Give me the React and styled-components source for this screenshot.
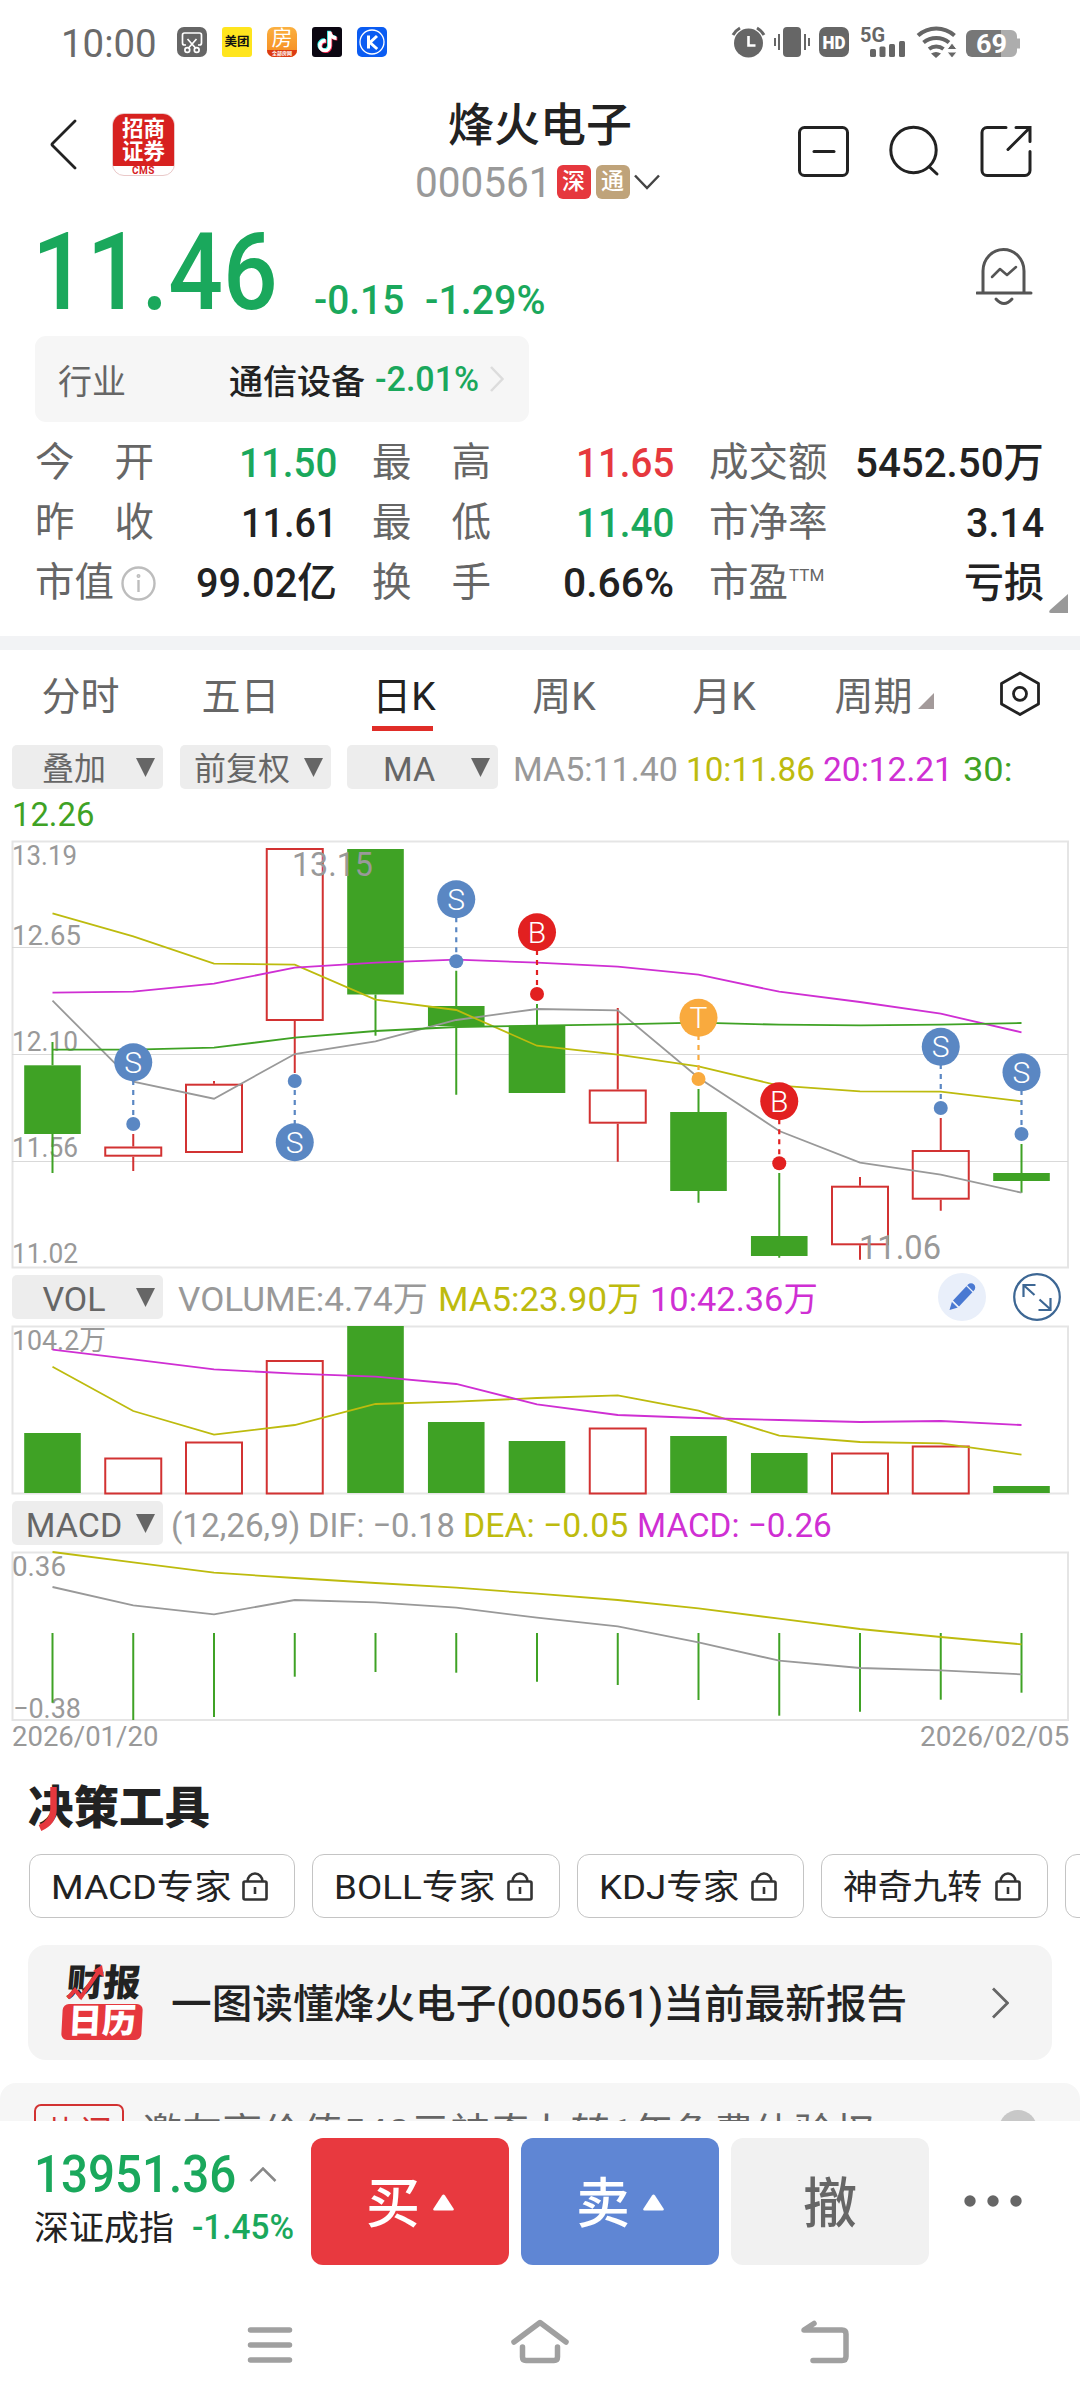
import React, { useLayoutEffect, useRef, useState } from 'react';
import styled, { createGlobalStyle } from 'styled-components';
import { FaTiktok } from 'react-icons/fa6';

const GREEN = '#1aa85c';
const RED = '#e6383e';
const UP = '#d23232';
const DOWN = '#3fa225';
const GREY = '#999';
const YELLOW = '#bdbb0e';
const PURPLE = '#cf2fd3';

const GlobalStyle = createGlobalStyle`
    * {
        box-sizing: border-box;
    }
    body {
        margin: 0;
        background: #fff;
        font-family: Roboto, "Noto Sans CJK SC", sans-serif;
        color: #222;
    }
    svg {
        display: block;
        flex: none;
    }
`;
const Screen = styled.div`
    width: 1080px;
    height: 2408px;
    overflow: hidden;
    background: #fff;
    display: flex;
    flex-direction: column;
    > * {
        flex: none;
    }
`;
const FitBox = styled.span`
    display: inline-block;
    flex: none;
    width: ${(p) => p.$w}px;
    margin-left: ${(p) => p.$ml || 0}px;
    margin-bottom: ${(p) => p.$mb || 0}px;
    padding-top: ${(p) => p.$pt || 0}px;
    white-space: nowrap;
    font-size: ${(p) => p.$size}px;
    font-weight: ${(p) => p.$weight || 400};
    color: ${(p) => p.$color || 'inherit'};
    line-height: 1.2;
`;
const FitInner = styled.span`
    display: inline-block;
    transform-origin: left center;
`;

// squeezes or stretches a text to a fixed column width
function Fit({ w, ml, mb, pt, size, weight, color, children }) {
    const ref = useRef(null);
    const [scale, setScale] = useState(1);
    useLayoutEffect(() => {
        setScale(w / ref.current.offsetWidth);
    }, [w, children]);
    return (
        <FitBox $w={w} $ml={ml} $mb={mb} $pt={pt} $size={size} $weight={weight} $color={color}>
            <FitInner ref={ref} style={{ transform: `scaleX(${scale})` }}>{children}</FitInner>
        </FitBox>
    );
}

/* ---------- status bar ---------- */

const StatusBar = styled.div`
    height: 84px;
    padding: 0 60px 0 61px;
    display: flex;
    align-items: center;
    justify-content: space-between;
`;
const StatusGroup = styled.div`
    display: flex;
    align-items: center;
    gap: ${(p) => p.$gap}px;
`;
const AppIcon = styled.div`
    width: 30px;
    height: 30px;
    border-radius: ${(p) => p.$radius || 6}px;
    background: ${(p) => p.$bg};
    color: ${(p) => p.$color || '#fff'};
    font-size: ${(p) => p.$size || 12}px;
    font-weight: 700;
    line-height: 1;
    display: flex;
    flex-direction: column;
    align-items: center;
    justify-content: center;
    overflow: hidden;
    white-space: nowrap;
`;
const HouseChar = styled.span`
    font-size: 21px;
    font-weight: 400;
    line-height: 23px;
`;
const HouseStrip = styled.span`
    width: 30px;
    height: 7px;
    background: #dc3a12;
    font-size: 5px;
    line-height: 6px;
    text-align: center;
`;

function Status() {
    return (
        <StatusBar>
            <StatusGroup $gap={20}>
                <Fit w={96} pt={5} size={38} color="#6a6a6a">10:00</Fit>
                <StatusGroup $gap={15}>
                    <AppIcon $bg="#666" $radius={7}>
                        <svg width="30" height="30" viewBox="0 0 30 30" fill="none" stroke="#fff" strokeWidth="1.7">
                            <path d="M9 18H7.5a2 2 0 0 1-2-2V8a2 2 0 0 1 2-2h15a2 2 0 0 1 2 2v8a2 2 0 0 1-2 2H21" />
                            <path d="M10.5 12l8 9M19.5 12l-8 9" />
                            <circle cx="10.3" cy="23" r="2.4" />
                            <circle cx="19.7" cy="23" r="2.4" />
                        </svg>
                    </AppIcon>
                    <AppIcon $bg="#ffe51e" $color="#111" $radius={3} $size={12.5}>美团</AppIcon>
                    <AppIcon $bg="linear-gradient(#fbb040, #f58a1f)" $radius={7}>
                        <HouseChar>房</HouseChar>
                        <HouseStrip>全部房网</HouseStrip>
                    </AppIcon>
                    <AppIcon $bg="#0b0712" $radius={3}>
                        <svg width="30" height="30" viewBox="0 0 30 30">
                            <FaTiktok x="4" y="3.6" size={21} color="#25f4ee" />
                            <FaTiktok x="5.6" y="5" size={21} color="#fe2c55" />
                            <FaTiktok x="4.8" y="4.3" size={21} color="#fff" />
                        </svg>
                    </AppIcon>
                    <AppIcon $bg="#0b5cf2" $radius={5}>
                        <svg width="30" height="30" viewBox="0 0 30 30" fill="none" stroke="#fff">
                            <circle cx="15" cy="15" r="12" strokeWidth="1.3" />
                            <path d="M11.5 8.5v13M20 9l-7 6.5l7.2 6.5" strokeWidth="3" />
                        </svg>
                    </AppIcon>
                </StatusGroup>
            </StatusGroup>
            <svg width="290" height="46" viewBox="730 19 290 46" fill="#666">
                <circle cx="748.5" cy="43" r="14.5" />
                <path d="M733 35a18 18 0 0 1 7-7M764 35a18 18 0 0 0-7-7" fill="none" stroke="#666" strokeWidth="3" />
                <path d="M748.500 36v9.500h7" fill="none" stroke="#fff" strokeWidth="2.6" />
                <rect x="783" y="27" width="18" height="30" rx="4" />
                <path d="M779 34v16M805 34v16M775 38v8M809 38v8" fill="none" stroke="#666" strokeWidth="2" />
                <rect x="819" y="27" width="30" height="30" rx="7" />
                <text x="822.5" y="48.8" fontSize="18" fontWeight="900" textLength="23" lengthAdjust="spacingAndGlyphs" fill="#fff">HD</text>
                <text x="860" y="41.5" fontSize="20" fontWeight="700" textLength="25" lengthAdjust="spacingAndGlyphs">5G</text>
                <rect x="870" y="49" width="6" height="8" rx="1.5" />
                <rect x="879.5" y="46.5" width="6" height="10.5" rx="1.5" />
                <rect x="889" y="44" width="6" height="13" rx="1.5" />
                <rect x="899" y="41" width="6" height="16" rx="1.5" />
                <g fill="none" stroke="#666" strokeWidth="4">
                    <path d="M918 35.500a27 27 0 0 1 36.500 0" />
                    <path d="M923.500 42.500a20 20 0 0 1 25.500 0" />
                    <path d="M929 49a12 12 0 0 1 14.500 0" />
                </g>
                <path d="M931 53.500q5-3 10 0l-5 4.500z" />
                <path d="M952 43l5 6.500h-10zM952 58l5-6h-10z" stroke="#fff" strokeWidth="1" />
                <path d="M972 30h30v27h-30a6 6 0 0 1-6-6V36a6 6 0 0 1 6-6z" fill="#777" />
                <path d="M1001 30h10a6 6 0 0 1 6 6v2.500h3v10h-3V51a6 6 0 0 1-6 6h-10z" fill="#adadad" />
                <text x="976" y="52.5" fontSize="25" fontWeight="700" textLength="31" lengthAdjust="spacingAndGlyphs" fill="#fff">69</text>
            </svg>
        </StatusBar>
    );
}

/* ---------- header ---------- */

const HeaderBar = styled.div`
    height: 120px;
    padding: 0 48px 0 50px;
    display: grid;
    grid-template-columns: 232px 1fr 234px;
`;
const HeaderLeft = styled.div`
    display: flex;
    align-items: flex-start;
    padding-top: 29px;
    gap: 35px;
`;
const BrokerLogo = styled.div`
    width: 63px;
    height: 63px;
    border-radius: 12px;
    border: 1px solid #eac9c9;
    overflow: hidden;
    background: #fff;
    text-align: center;
    font-weight: 700;
`;
const BrokerName = styled.div`
    height: 52px;
    padding-top: 3px;
    background: #d7211f;
    color: #fff;
    font-size: 21.5px;
    line-height: 23px;
`;
const BrokerCode = styled.div`
    color: #d7211f;
    font-size: 10px;
    line-height: 9px;
    letter-spacing: 0.5px;
`;
const StockTitle = styled.div`
    display: flex;
    flex-direction: column;
    align-items: center;
    padding-top: 13px;
`;
const StockName = styled.div`
    font-size: 46px;
    font-weight: 500;
    line-height: 56px;
`;
const StockCode = styled.div`
    display: flex;
    align-items: center;
    height: 56px;
    margin-top: 1px;
`;
const Badge = styled.span`
    width: 34px;
    height: 34px;
    margin-left: 5px;
    border-radius: 6px;
    background: ${(p) => p.$bg};
    color: #fff;
    font-size: 23px;
    font-weight: 500;
    line-height: 33px;
    text-align: center;
`;

function Header() {
    return (
        <HeaderBar>
            <HeaderLeft>
                <svg width="27" height="63" viewBox="50 113 27 63" fill="none" stroke="#222" strokeWidth="2.8" strokeLinecap="round" strokeLinejoin="round">
                    <path d="M75 121L52.500 143.500q-1 1 0 2L75 168" />
                </svg>
                <BrokerLogo>
                    <BrokerName>招商<br />证券</BrokerName>
                    <BrokerCode>CMS</BrokerCode>
                </BrokerLogo>
            </HeaderLeft>
            <StockTitle>
                <StockName>烽火电子</StockName>
                <StockCode>
                    <Fit w={137} pt={2} size={42} color={GREY}>000561</Fit>
                    <Badge $bg={RED}>深</Badge>
                    <Badge $bg="#bfa37a">通</Badge>
                    <svg width="36" height="24" viewBox="634 168 36 24" fill="none" stroke="#444" strokeWidth="2.5">
                        <path d="M639 173.500l12 12.500l12-12.500" />
                    </svg>
                </StockCode>
            </StockTitle>
            <svg width="234" height="120" viewBox="798 84 234 120" fill="none" stroke="#222" strokeWidth="3" strokeLinecap="round">
                <rect x="799.5" y="127.5" width="48" height="48" rx="5" />
                <path d="M814 151.500h20" />
                <circle cx="913.5" cy="150" r="22.7" />
                <path d="M929.500 167l7.500 7" />
                <path d="M1006 127.500h-19a5 5 0 0 0-5 5v38a5 5 0 0 0 5 5h38a5 5 0 0 0 5-5v-19" />
                <path d="M1016 127.500h14v14M1029 128.500l-21 21" />
            </svg>
        </HeaderBar>
    );
}

/* ---------- quote ---------- */

const QuoteRow = styled.div`
    height: 132px;
    padding: 0 44px 0 32px;
    display: flex;
    align-items: flex-start;
    justify-content: space-between;
`;
const Prices = styled.div`
    display: flex;
    align-items: flex-end;
    margin-top: 4px;
`;
const Industry = styled.div`
    width: 494px;
    height: 86px;
    margin-left: 35px;
    padding: 0 24px 0 23px;
    border-radius: 11px;
    background: #f6f6f6;
    display: flex;
    align-items: center;
    font-size: 34px;
`;
const IndustryLabel = styled.span`
    color: #666;
    flex: 1;
`;
const IndustryName = styled.span`
    font-weight: 500;
`;
const Stats = styled.div`
    position: relative;
    height: 214px;
    padding: 11px 0 0 35px;
    display: grid;
    grid-template-columns: 302px 302px 335px;
    column-gap: 35px;
    grid-template-rows: repeat(3, 60px);
    align-items: center;
`;
const Stat = styled.div`
    display: flex;
    align-items: center;
    justify-content: space-between;
    height: 60px;
`;
const StatLabel = styled.span`
    width: 119px;
    display: flex;
    align-items: center;
    justify-content: ${(p) => (p.$spread ? 'space-between' : 'flex-start')};
    font-size: 39.5px;
    line-height: 60px;
    color: #666;
    white-space: nowrap;
    sup {
        font-size: 17px;
        line-height: 1;
        margin: -16px 0 0 1px;
    }
    svg {
        margin-left: 7px;
    }
`;
const MoreCorner = styled.svg`
    position: absolute;
    right: 12px;
    bottom: 23px;
`;
const Band = styled.div`
    height: 14px;
    background: #f2f3f5;
`;

const STATS = [
    { label: '今开', value: '11.50', w: 98, color: GREEN },
    { label: '最高', value: '11.65', w: 98, color: RED },
    { label: '成交额', value: '5452.50万', w: 189 },
    { label: '昨收', value: '11.61', w: 96 },
    { label: '最低', value: '11.40', w: 98, color: GREEN },
    { label: '市净率', value: '3.14', w: 78 },
    { label: '市值', value: '99.02亿', w: 141, info: true },
    { label: '换手', value: '0.66%', w: 111 },
    { label: '市盈', value: '亏损', w: 80, sup: 'TTM' },
];

function Quote() {
    return (
        <>
            <QuoteRow>
                <Prices>
                    <Fit w={246} size={108} weight={500} color={GREEN}>11.46</Fit>
                    <Fit w={90} ml={36} mb={12} size={41} weight={500} color={GREEN}>-0.15</Fit>
                    <Fit w={120} ml={21} mb={12} size={41} weight={500} color={GREEN}>-1.29%</Fit>
                </Prices>
                <svg width="60" height="132" viewBox="978 204 60 132" fill="none" stroke="#555" strokeWidth="3" strokeLinecap="round" strokeLinejoin="round">
                    <path d="M985 292v-21a20.500 21.500 0 0 1 41 0v21" />
                    <path d="M979 293h54" />
                    <path d="M998 299q8 9 16 0" />
                    <path d="M994 277l8-8l7 6l9-8" strokeWidth="2.5" />
                </svg>
            </QuoteRow>
            <Industry>
                <IndustryLabel>行业</IndustryLabel>
                <IndustryName>通信设备</IndustryName>
                <Fit w={104} ml={10} pt={2} size={35} weight={500} color={GREEN}>-2.01%</Fit>
                <svg width="26" height="30" viewBox="480 364 26 30" fill="none" stroke="#dcdcdc" strokeWidth="2.5">
                    <path d="M492 367l11.500 12l-11.500 12" />
                </svg>
            </Industry>
            <Stats>
                {STATS.map((s) => {
                    const spread = s.label.length === 2 && !s.info && !s.sup;
                    return (
                        <Stat key={s.label}>
                            <StatLabel $spread={spread}>
                                {spread ? [...s.label].map((c) => <span key={c}>{c}</span>) : s.label}
                                {s.sup && <sup>{s.sup}</sup>}
                                {s.info && (
                                    <svg width="35" height="35" viewBox="0 0 35 35" fill="none" stroke="#bdbdbd" strokeWidth="2.4">
                                        <circle cx="17.5" cy="17.5" r="16" />
                                        <path d="M17.500 14v12" />
                                        <circle cx="17.5" cy="10" r="0.8" />
                                    </svg>
                                )}
                            </StatLabel>
                            <Fit w={s.w} pt={1} size={40.5} weight={500} color={s.color}>{s.value}</Fit>
                        </Stat>
                    );
                })}
                <MoreCorner width="19" height="19" viewBox="0 0 19 19">
                    <path d="M19 0v19H2q-3 0-1-3z" fill="#999" />
                </MoreCorner>
            </Stats>
            <Band />
        </>
    );
}

/* ---------- chart tabs & legends ---------- */

const Tabs = styled.div`
    height: 95px;
    padding-bottom: 9px;
    display: grid;
    grid-template-columns: 161px 159px 168px 152px 168px 152px 120px;
    justify-items: center;
    align-items: center;
`;
const Tab = styled.div`
    position: relative;
    display: flex;
    align-items: center;
    gap: 5px;
    height: 86px;
    font-size: 39px;
    color: ${(p) => (p.$active ? '#222' : '#666')};
    &::after {
        content: '';
        display: ${(p) => (p.$active ? 'block' : 'none')};
        position: absolute;
        left: 0;
        right: 3px;
        bottom: 5px;
        height: 5px;
        background: #e02d28;
    }
    svg {
        margin-top: 16px;
    }
`;
const LegendRow = styled.div`
    height: 44px;
    margin-top: ${(p) => p.$mt || 0}px;
    padding-left: 12px;
    display: flex;
    align-items: center;
`;
const Select = styled.div`
    width: 151px;
    height: 44px;
    margin-right: ${(p) => p.$mr}px;
    padding-right: 8px;
    border-radius: 5px;
    background: #ededed;
    color: #666;
    font-size: ${(p) => p.$size || 32}px;
    line-height: 44px;
    display: flex;
    align-items: center;
    flex: none;
    span {
        width: 124px;
        padding-top: 3px;
        text-align: center;
    }
`;
const Legend = styled.div`
    display: flex;
    gap: 8px;
    padding-top: ${(p) => p.$pt || 0}px;
    flex: 1;
`;
const LegendWrap = styled.div`
    height: 51px;
    padding: 5px 0 0 12px;
`;

function Picker({ children, mr = 0, size }) {
    return (
        <Select $mr={mr} $size={size}>
            <span>{children}</span>
            <svg width="19" height="19" viewBox="0 0 19 19">
                <path d="M0 0h19l-9.500 19z" fill="#666" />
            </svg>
        </Select>
    );
}

function ChartTabs() {
    return (
        <Tabs>
            <Tab>分时</Tab>
            <Tab>五日</Tab>
            <Tab $active>日K</Tab>
            <Tab>周K</Tab>
            <Tab>月K</Tab>
            <Tab>
                周期
                <svg width="16" height="16" viewBox="0 0 16 16"><path d="M16 0v16H0z" fill="#a39a9a" /></svg>
            </Tab>
            <svg width="42" height="46" viewBox="1002 670 42 46" fill="none" stroke="#222" strokeWidth="2.8" strokeLinejoin="round">
                <path d="M1023 673l18.500 10.500v20.500L1023 714.500L1004.500 704v-20.500z" />
                <circle cx="1023" cy="693.8" r="6.5" />
            </svg>
        </Tabs>
    );
}

/* ---------- charts ---------- */

const STEP = 80.75;
const cx = (i) => 52.5 + i * STEP;
const line = (ys) => ys.map((y, i) => `${cx(i)},${y}`).join(' ');

// [up, body top, body bottom, wick top, wick bottom]
const CANDLES = [
    [0, 1065.3, 1134, 1042, 1173],
    [1, 1146.5, 1156.7, 1134, 1171],
    [1, 1083.7, 1153, 1081, 1153],
    [1, 848, 1021, 848, 1073],
    [0, 849, 994.5, 849, 1035.7],
    [0, 1006, 1026, 970.7, 1094.7],
    [0, 1025.7, 1093, 1004, 1093],
    [1, 1089.5, 1123.7, 1008, 1161.7],
    [0, 1112, 1191, 1089, 1202.7],
    [0, 1236, 1256, 1173, 1257.7],
    [1, 1185.7, 1245.3, 1177, 1259.7],
    [1, 1150, 1199.7, 1118, 1210.7],
    [0, 1173, 1181, 1144, 1192.7],
];
const MA = [
    [GREY, [1000.7, 1081.7, 1098.7, 1054, 1041.3, 1020, 1009, 1010.3, 1077.7, 1131, 1162.7, 1174.7, 1192.7]],
    [YELLOW, [913.3, 936.3, 963.7, 964.7, 999.7, 1010, 1045.7, 1054.7, 1066.3, 1085.7, 1091.3, 1091.7, 1101.3]],
    [PURPLE, [992.7, 991.7, 983.7, 967.7, 962.7, 959.7, 962.7, 966.7, 974.7, 991.7, 1002, 1013.7, 1032.3]],
    [DOWN, [1049.7, 1049.7, 1047.7, 1037.7, 1031, 1027, 1025.7, 1024.3, 1022.7, 1024.7, 1025.3, 1024.7, 1023]],
];
const BLUE = '#5a87c3';
// [index, letter, colour, badge y, dot y]
const MARKS = [
    [1, 'S', BLUE, 1062.3, 1124],
    [3, 'S', BLUE, 1142.3, 1081],
    [5, 'S', BLUE, 899.3, 961.3],
    [6, 'B', '#e22020', 932.3, 994],
    [8, 'T', '#f9aa3e', 1017.7, 1079],
    [9, 'B', '#e22020', 1101.3, 1163.3],
    [11, 'S', BLUE, 1046.7, 1108],
    [12, 'S', BLUE, 1072.3, 1134],
];
const PRICE_LABELS = [['13.19', 865, 65], ['12.65', 945, 69], ['12.10', 1051, 66], ['11.56', 1157, 66], ['11.02', 1263, 66]];

const VOLUME = [
    [0, 1433], [1, 1457.5], [1, 1441.5], [1, 1360], [0, 1326], [0, 1422], [0, 1441],
    [1, 1427.5], [0, 1436], [0, 1453], [1, 1452.5], [1, 1445.5], [0, 1486],
];
const VOL_MA = [
    [YELLOW, [1366.7, 1411, 1434.7, 1425, 1404, 1401.7, 1398, 1395.3, 1410.7, 1435.7, 1442, 1443.3, 1454.7]],
    [PURPLE, [1349.7, 1359.3, 1369.3, 1373.7, 1376.7, 1384, 1404.3, 1415, 1418, 1420, 1422, 1421, 1425]],
];
const MACD_BARS = [1702.7, 1720, 1717, 1676.7, 1672, 1672.7, 1681.7, 1685, 1700, 1715.7, 1711.7, 1699.7, 1692.7];
const MACD_LINES = [
    [YELLOW, [1552, 1562.3, 1572.7, 1578, 1583, 1587.7, 1593.7, 1600, 1608.3, 1618.7, 1629, 1637, 1644.3]],
    [GREY, [1587, 1605.3, 1614.3, 1600, 1602.3, 1607.7, 1617.7, 1626.3, 1642.3, 1660.7, 1668, 1670.3, 1674.3]],
];

function ChartText({ x, y, w, size = 28, children }) {
    return (
        <text x={x} y={y} fontSize={size} fill={GREY} textLength={w} lengthAdjust="spacingAndGlyphs">{children}</text>
    );
}

function Bar({ i, up, top, bottom }) {
    if (up) {
        return <rect x={cx(i) - 28} y={top + 1} width="56" height={bottom - top - 2} fill="none" stroke={UP} strokeWidth="2" />;
    }
    return <rect x={cx(i) - 28.3} y={top} width="56.6" height={bottom - top} fill={DOWN} />;
}

function Lines({ data }) {
    return data.map(([color, ys]) => (
        <polyline key={color} points={line(ys)} fill="none" stroke={color} strokeWidth="1.8" />
    ));
}

function CandleChart() {
    return (
        <svg width="1080" height="430" viewBox="0 840 1080 430">
            <rect x="12.5" y="841.5" width="1055.5" height="426" fill="#fff" stroke="#e5e5e5" strokeWidth="2" />
            {[947.5, 1054.5, 1161.5].map((y) => <path key={y} d={`M12 ${y}H1068`} stroke="#d9d9d9" />)}
            {PRICE_LABELS.map(([t, y, w]) => <ChartText key={t} x={12} y={y} w={w}>{t}</ChartText>)}
            {CANDLES.map(([up, top, bottom, high, low], i) => (
                <g key={i}>
                    <path d={`M${cx(i)} ${high}V${top}M${cx(i)} ${bottom}V${low}`} stroke={up ? UP : DOWN} strokeWidth="2" />
                    <Bar i={i} up={up} top={top} bottom={bottom} />
                </g>
            ))}
            <Lines data={MA} />
            <ChartText x={292} y={876} w={81} size={34}>13.15</ChartText>
            <ChartText x={859} y={1259} w={82} size={34}>11.06</ChartText>
            {MARKS.map(([i, letter, color, y, dot]) => (
                <g key={i}>
                    <path d={`M${cx(i)} ${dot}V${y}`} stroke={color} strokeWidth="2.2" strokeDasharray="5 5" strokeDashoffset="1" />
                    <circle cx={cx(i)} cy={dot} r="7" fill={color} />
                    <circle cx={cx(i)} cy={y} r="19" fill={color} />
                    <text x={cx(i)} y={y + 10.5} fontSize="30" fontWeight="300" textAnchor="middle" fill="#fff">{letter}</text>
                </g>
            ))}
        </svg>
    );
}

function VolumeChart() {
    return (
        <svg width="1080" height="170" viewBox="0 1325 1080 170">
            <rect x="12.5" y="1326.5" width="1055.5" height="167" fill="#fff" stroke="#e5e5e5" strokeWidth="2" />
            <ChartText x={12} y={1350} w={94}>104.2万</ChartText>
            {VOLUME.map(([up, top], i) => <Bar key={i} i={i} up={up} top={top} bottom={up ? 1494.5 : 1493} />)}
            <Lines data={VOL_MA} />
        </svg>
    );
}

function MacdChart() {
    return (
        <svg width="1080" height="170" viewBox="0 1551 1080 170">
            <rect x="12.5" y="1552.5" width="1055.5" height="167.5" fill="#fff" stroke="#e5e5e5" strokeWidth="2" />
            <ChartText x={12} y={1576} w={54}>0.36</ChartText>
            <ChartText x={13} y={1718} w={68}>−0.38</ChartText>
            {MACD_BARS.map((y, i) => <path key={i} d={`M${cx(i)} 1633V${y}`} stroke={DOWN} strokeWidth="2" />)}
            <Lines data={MACD_LINES} />
        </svg>
    );
}

const ChartGap = styled.div`
    height: 6px;
`;
const Dates = styled.div`
    height: 32px;
    padding: 0 11px 1px 12px;
    display: flex;
    align-items: center;
    justify-content: space-between;
`;

function Charts() {
    return (
        <>
            <ChartTabs />
            <LegendRow>
                <Picker mr={17}>叠加</Picker>
                <Picker mr={16}>前复权</Picker>
                <Picker mr={15} size={34}>MA</Picker>
                <Legend $pt={4}>
                    <Fit w={165} size={34} color={GREY}>MA5:11.40</Fit>
                    <Fit w={129} size={34} color={YELLOW}>10:11.86</Fit>
                    <Fit w={130} size={34} color={PURPLE}>20:12.21</Fit>
                    <Fit w={49} ml={2} size={34} color={DOWN}>30:</Fit>
                </Legend>
            </LegendRow>
            <LegendWrap>
                <Fit w={82} size={34} color={DOWN}>12.26</Fit>
            </LegendWrap>
            <CandleChart />
            <LegendRow $mt={5}>
                <Picker mr={15} size={34}>VOL</Picker>
                <Legend $pt={5}>
                    <Fit w={250} size={34} color={GREY}>VOLUME:4.74万</Fit>
                    <Fit w={204} ml={2} size={34} color={YELLOW}>MA5:23.90万</Fit>
                    <Fit w={168} size={34} color={PURPLE}>10:42.36万</Fit>
                </Legend>
                <svg width="146" height="50" viewBox="934 1272 146 50" fill="none">
                    <circle cx="962" cy="1297" r="24" fill="#e9effa" />
                    <path d="M949.500 1310l2.500-8.500l6 6z" fill="#4a79d2" />
                    <path d="M953 1300.500l15-16a4.200 4.200 0 0 1 6 6l-15 16z" fill="#4a79d2" />
                    <path d="M966 1285l7 7M952 1301l6.500 6.500" stroke="#e9effa" strokeWidth="1.2" />
                    <circle cx="1037" cy="1297" r="22.8" stroke="#3d6794" strokeWidth="2.2" />
                    <g stroke="#3d6794" strokeWidth="2.2">
                        <path d="M1034.500 1295L1024 1285.500M1023.500 1297v-12h12M1039.500 1299.500l10.500 9.500M1050.500 1298v12h-12" />
                    </g>
                </svg>
            </LegendRow>
            <ChartGap />
            <VolumeChart />
            <LegendRow $mt={6}>
                <Picker mr={8} size={34}>MACD</Picker>
                <Legend $pt={4}>
                    <Fit w={129} size={34} color={GREY}>(12,26,9)</Fit>
                    <Fit w={147} size={34} color={GREY}>DIF: −0.18</Fit>
                    <Fit w={165} size={34} color={YELLOW}>DEA: −0.05</Fit>
                    <Fit w={195} ml={1} size={34} color={PURPLE}>MACD: −0.26</Fit>
                </Legend>
            </LegendRow>
            <ChartGap />
            <MacdChart />
            <Dates>
                <Fit w={146} size={27.5} color={GREY}>2026/01/20</Fit>
                <Fit w={149} size={27.5} color={GREY}>2026/02/05</Fit>
            </Dates>
        </>
    );
}

/* ---------- tools ---------- */

const ToolsTitle = styled.h2`
    position: relative;
    height: 101px;
    margin: 0;
    padding: 28px 0 0 28px;
    font-size: 45.5px;
    font-weight: 900;
    line-height: 56px;
    svg {
        position: absolute;
        left: 36px;
        top: 32px;
    }
`;
const ToolList = styled.div`
    display: flex;
    gap: 17px;
    height: 64px;
    padding-left: 29px;
    overflow: hidden;
`;
const Tool = styled.div`
    flex: none;
    height: 64px;
    width: ${(p) => p.$w}px;
    padding: 0 26px 0 21px;
    border: 1.5px solid #c4c4c4;
    border-radius: 12px;
    display: flex;
    align-items: center;
    justify-content: space-between;
`;
const Report = styled.div`
    height: 115px;
    margin: 27px 28px 0;
    padding: 0 43px 0 34px;
    border-radius: 18px;
    background: #f4f4f4;
    display: flex;
    align-items: center;
    > svg {
        margin-left: auto;
    }
`;
const ReportMark = styled.div`
    position: relative;
    width: 80px;
    height: 76px;
    font-weight: 900;
    text-align: center;
    flex: none;
    svg {
        position: absolute;
        left: 4px;
        top: 0;
    }
`;
const ReportTop = styled.div`
    font-size: 37px;
    line-height: 37px;
    height: 39px;
    padding-left: 3px;
    transform: skewX(-5deg);
`;
const ReportBottom = styled.div`
    height: 36px;
    border-radius: 6px;
    background: ${RED};
    color: #fff;
    font-size: 34px;
    line-height: 34px;
    transform: skewX(-3deg);
`;
const Promo = styled.div`
    height: 38px;
    margin-top: 23px;
    padding: 21px 43px 0 34px;
    border-radius: 16px 16px 0 0;
    background: #f6f6f6;
    display: flex;
    align-items: flex-start;
    overflow: hidden;
`;
const PromoTag = styled.span`
    width: 90px;
    height: 56px;
    margin-right: 18px;
    border: 2px solid ${UP};
    border-radius: 7px;
    color: ${UP};
    font-size: 33px;
    line-height: 56px;
    text-align: center;
    flex: none;
`;
const PromoClose = styled.span`
    width: 38px;
    height: 38px;
    margin: 6px 0 0 auto;
    border-radius: 50%;
    background: #c8c8c8;
    flex: none;
`;

const TOOLS = [
    { name: 'MACD专家', w: 266, tw: 180 },
    { name: 'BOLL专家', w: 248, tw: 161 },
    { name: 'KDJ专家', w: 227, tw: 140 },
    { name: '神奇九转', w: 227, tw: 139 },
];

function Tools() {
    return (
        <>
            <ToolsTitle>
                决策工具
                <svg width="24" height="46" viewBox="36 1785 24 46" fill="none" stroke={RED} strokeWidth="6.5">
                    <path d="M53.500 1787v22q0 13-13.500 19" />
                </svg>
            </ToolsTitle>
            <ToolList>
                {TOOLS.map((t) => (
                    <Tool key={t.name} $w={t.w}>
                        <Fit w={t.tw} pt={2} size={34}>{t.name}</Fit>
                        <svg width="26" height="29" viewBox="0 0 26 29" fill="none" stroke="#333" strokeWidth="2.6">
                            <rect x="1.5" y="9.5" width="23" height="18" rx="1.5" />
                            <path d="M5.500 9.500a7.500 8 0 0 1 15 0M13 15v7" />
                        </svg>
                    </Tool>
                ))}
                <Tool $w={120} />
            </ToolList>
            <Report>
                <ReportMark>
                    <ReportTop>财报</ReportTop>
                    <ReportBottom>日历</ReportBottom>
                    <svg width="46" height="36" viewBox="66 1964 46 36" fill="none" stroke={RED} strokeWidth="4">
                        <path d="M68 1997l7-8l6 7l18-26" />
                        <path d="M93 1970l9-6l2 12z" fill={RED} stroke="none" />
                    </svg>
                </ReportMark>
                <Fit w={736} ml={29} pt={4} size={40} weight={500}>一图读懂烽火电子(000561)当前最新报告</Fit>
                <svg width="20" height="32" viewBox="989 1987 20 32" fill="none" stroke="#666" strokeWidth="2.8">
                    <path d="M993 1988.500l14.500 14.500l-14.500 14.500" />
                </svg>
            </Report>
            <Promo>
                <PromoTag>热门</PromoTag>
                <Fit w={732} pt={7} size={37} color="#666">邀友享价值540元神奇九转1年免费体验权</Fit>
                <PromoClose />
            </Promo>
        </>
    );
}

/* ---------- bottom ---------- */

const TradeBar = styled.div`
    height: 161px;
    padding: 17px 0 0 34px;
    background: #fff;
    display: flex;
`;
const IndexBox = styled.div`
    width: 277px;
    padding-top: 7px;
`;
const IndexLine = styled.div`
    display: flex;
    align-items: center;
    gap: ${(p) => p.$gap}px;
    height: ${(p) => p.$h}px;
`;
const TradeButton = styled.div`
    width: 198px;
    height: 127px;
    margin-right: 12px;
    padding-top: 7px;
    border-radius: 12px;
    background: ${(p) => p.$bg};
    color: ${(p) => p.$color || '#fff'};
    font-size: 54px;
    font-weight: 500;
    line-height: 1;
    display: flex;
    align-items: center;
    justify-content: center;
    gap: 13px;
    svg {
        margin-bottom: 5px;
    }
`;
const NavBar = styled.div`
    height: 126px;
    padding-top: 28px;
    display: flex;
    justify-content: center;
`;

const UpArrow = () => (
    <svg width="21" height="17" viewBox="0 0 21 17" fill="#fff">
        <path d="M9 1.500q1.500-2 3 0l8.500 13q1 2-1 2h-18q-2 0-1-2z" />
    </svg>
);

function Bottom() {
    return (
        <>
            <TradeBar>
                <IndexBox>
                    <IndexLine $h={60} $gap={11}>
                        <Fit w={202} size={52} weight={500} color={GREEN}>13951.36</Fit>
                        <svg width="30" height="16" viewBox="247 2168 30 16" fill="none" stroke="#888" strokeWidth="2.5">
                            <path d="M250.500 2182l12.500-12.500l12.500 12.500" />
                        </svg>
                    </IndexLine>
                    <IndexLine $h={46} $gap={18}>
                        <Fit w={140} size={34}>深证成指</Fit>
                        <Fit w={102} size={35} weight={500} color={GREEN}>-1.45%</Fit>
                    </IndexLine>
                </IndexBox>
                <TradeButton $bg="#e8393f">买<UpArrow /></TradeButton>
                <TradeButton $bg="#5f86d4">卖<UpArrow /></TradeButton>
                <TradeButton $bg="#f1f1f1" $color="#666">撤</TradeButton>
                <svg width="84" height="127" viewBox="941 2138 84 127" fill="#666">
                    <circle cx="970" cy="2201" r="5.7" />
                    <circle cx="993" cy="2201" r="5.7" />
                    <circle cx="1016" cy="2201" r="5.7" />
                </svg>
            </TradeBar>
            <NavBar>
                <svg width="620" height="60" viewBox="230 2310 620 60" fill="none" stroke="#a0a0a0" strokeWidth="5.5" strokeLinecap="round" strokeLinejoin="round">
                    <path d="M250.500 2330h39M250.500 2345h39M250.500 2360h39" />
                    <path d="M514 2342l26-19.500l26 19.500" />
                    <path d="M522.500 2347v10q0 3.500 3.500 3.500h28q3.500 0 3.500-3.500v-10" />
                    <path d="M813 2360.500h29q4 0 4-4v-22.500q0-4-4-4h-38l10-6.500" />
                </svg>
            </NavBar>
        </>
    );
}

export default function App() {
    return (
        <>
            <GlobalStyle />
            <Screen>
                <Status />
                <Header />
                <Quote />
                <Charts />
                <Tools />
                <Bottom />
            </Screen>
        </>
    );
}
